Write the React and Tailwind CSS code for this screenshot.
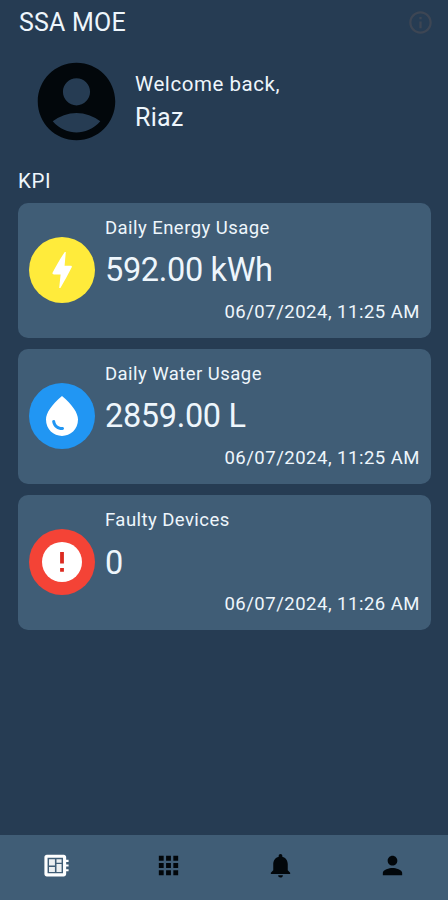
import {
  MdAccountCircle,
  MdApps,
  MdInfoOutline,
  MdNotifications,
  MdPerson,
  MdWaterDrop,
} from "react-icons/md";

function BoltIcon({ size }) {
  return (
    <svg width={size} height={size} viewBox="0 0 24 24" fill="currentColor">
      <path d="M11.2 21h-.6l.7-6.8H8c-.7 0-1-.5-.6-1.1C9 10.1 11 6.4 13.4 3h.5l-.6 6.9h3c.6 0 .8.4.5.9C15.1 14.3 13.2 17.7 11.2 21z" />
    </svg>
  );
}

function ErrorIcon({ size }) {
  return (
    <svg width={size} height={size} viewBox="0 0 24 24" fill="none">
      <circle cx="12" cy="12" r="10" fill="currentColor" />
      <path d="M11.05 7h1.9v5.8h-1.9zM11.05 15h1.9v1.9h-1.9z" fill="#dc2a20" />
    </svg>
  );
}

function BoardIcon({ size }) {
  return (
    <svg width={size} height={size} viewBox="0 0 24 24" fill="currentColor">
      <path
        fillRule="evenodd"
        d="M20 9h2V7.300h-2V5c0-1.100-.9-2-2-2H4c-1.100 0-2 .9-2 2v14c0 1.100.9 2 2 2h14c1.100 0 2-.9 2-2v-2.300h2V15h-2v-2.100h2v-1.800h-2V9zM17.400 18.400H4.600V5.600h12.800v12.800z"
      />
      <path
        d="M5.800 6.800h4.900v5.200H5.800zM12 6.800h4.200v2.900H12zM5.800 13.200h4.900v4.100H5.800zM12 10.800h4.200v6.500H12z"
        className="opacity-90"
      />
    </svg>
  );
}

const kpis = [
  {
    title: "Daily Energy Usage",
    value: "592.00 kWh",
    time: "06/07/2024, 11:25 AM",
    icon: BoltIcon,
    color: "bg-[#ffeb3b]",
  },
  {
    title: "Daily Water Usage",
    value: "2859.00 L",
    time: "06/07/2024, 11:25 AM",
    icon: MdWaterDrop,
    color: "bg-[#2196f3]",
  },
  {
    title: "Faulty Devices",
    value: "0",
    time: "06/07/2024, 11:26 AM",
    icon: ErrorIcon,
    color: "bg-[#f44336]",
  },
];

const tabs = [
  { key: "dashboard", icon: BoardIcon },
  { key: "apps", icon: MdApps },
  { key: "alerts", icon: MdNotifications },
  { key: "profile", icon: MdPerson },
];

function KpiCard({ item }) {
  const Icon = item.icon;
  return (
    <div className="flex h-[135px] items-center rounded-[10px] bg-[#405d76] px-[11px]">
      <div
        className={`mb-px flex size-[66px] shrink-0 items-center justify-center rounded-full text-white ${item.color}`}
      >
        <Icon size={48} />
      </div>
      <div className="ml-[10px] flex h-full flex-1 flex-col pt-[13px]">
        <p className="text-[18.5px] leading-6 tracking-[0.45px]">{item.title}</p>
        <p className="mt-[9.5px] text-[32.5px] leading-[42px] tracking-[-0.35px]">{item.value}</p>
        <p className="mt-[8.5px] text-right text-[18.5px] leading-6 tracking-[0.5px]">{item.time}</p>
      </div>
    </div>
  );
}

export default function App() {
  const activeTab = "dashboard";

  return (
    <div className="flex h-[900px] w-[448px] flex-col overflow-hidden bg-[#263c53] font-['Roboto',sans-serif] text-[#eef6fc]">
      {/* Header */}
      <header className="flex h-11 items-center justify-between pl-[19px] pr-[14px]">
        <h1 className="pt-[2px] text-[25px] tracking-[0.2px]">SSA MOE</h1>
        <MdInfoOutline size={27} className="text-[#3d4654]" />
      </header>

      {/* Greeting */}
      <section className="flex h-[115px] items-center pl-[30px]">
        <MdAccountCircle size={93} className="shrink-0 text-[#02070b]" />
        <div className="ml-3">
          <p className="text-[20.5px] leading-7 tracking-[0.55px]">Welcome back,</p>
          <p className="mt-1 text-[25px] leading-8 tracking-[0.3px]">Riaz</p>
        </div>
      </section>

      {/* KPI cards */}
      <main className="flex-1 pl-[18px] pr-[17px] pt-[9px]">
        <h2 className="text-[20.5px] leading-[26px] tracking-[0.6px]">KPI</h2>
        <div className="mt-[8.5px] flex flex-col gap-[11.3px]">
          {kpis.map((item) => (
            <KpiCard key={item.title} item={item} />
          ))}
        </div>
      </main>

      {/* Bottom navigation */}
      <nav className="grid h-[65px] grid-cols-4 bg-[#405d76] pb-[5px]">
        {tabs.map(({ key, icon: Icon }) => (
          <button
            key={key}
            className={`flex items-center justify-center ${key === activeTab ? "text-white" : "text-[#02070b]"}`}
          >
            <Icon size={29} />
          </button>
        ))}
      </nav>
    </div>
  );
}
